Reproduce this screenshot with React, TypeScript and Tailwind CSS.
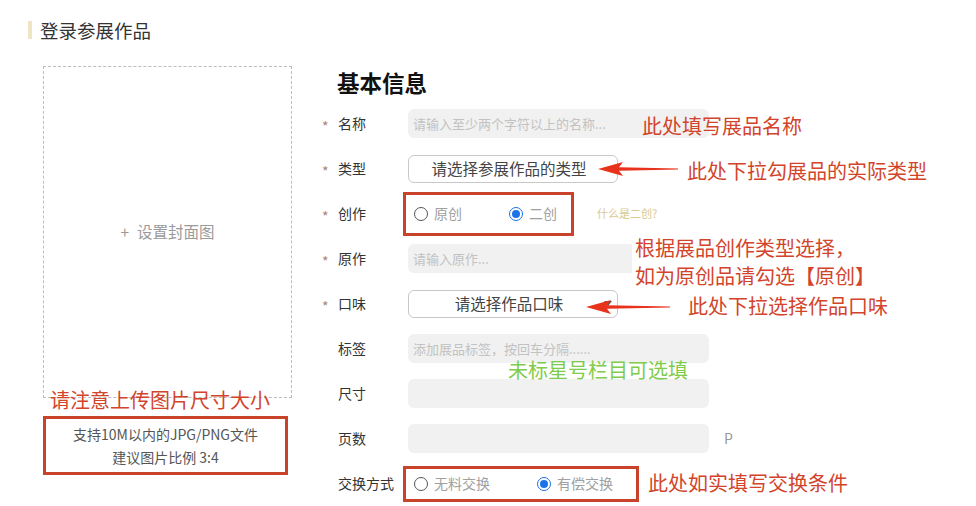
import React from "react";

const RED = "#d2442b";

function Arrow({ w }: { w: number }) {
  return (
    <svg width={w} height={14} viewBox={`0 0 ${w} 14`}>
      <polygon
        points={`0,7 25,0 21,5.2 ${w},6.5 ${w},7.5 21,8.8 25,14`}
        fill="#e8321c"
      />
    </svg>
  );
}

function Radio({ checked, label }: { checked?: boolean; label: string }) {
  return (
    <span className="flex items-center gap-[6px]">
      {checked ? (
        <span className="w-[14px] h-[14px] rounded-full border-[1.5px] border-[#1a73e8] bg-white flex items-center justify-center">
          <span className="w-[8px] h-[8px] rounded-full bg-[#1a73e8]" />
        </span>
      ) : (
        <span className="w-[14px] h-[14px] rounded-full border border-[#555] bg-white" />
      )}
      <span className="text-[14px] text-[#a0a0a0]">{label}</span>
    </span>
  );
}

function Row({
  star,
  label,
  children,
}: {
  star?: boolean;
  label: string;
  children?: React.ReactNode;
}) {
  return (
    <div className="h-[45px] flex items-center">
      <span className="w-[16px] text-[14px] text-[#a88484] leading-none pt-[4px]">
        {star ? "*" : ""}
      </span>
      <span className="w-[70px] text-[14px] text-[#333]">{label}</span>
      {children}
    </div>
  );
}

function Input({ ph }: { ph?: string }) {
  return (
    <div className="w-[301px] h-[29px] rounded-[6px] bg-[#f1f1f1] px-[5px] flex items-center text-[13px] text-[#c2c2c2]">
      {ph}
    </div>
  );
}

function Select({ text, arrow }: { text: string; arrow?: boolean }) {
  return (
    <div className="relative w-[210px] h-[28px] rounded-[6px] border border-[#c8c8c8] bg-white flex items-center justify-center pr-[8px] text-[15.5px] text-[#444]">
      {text}
      {arrow && (
        <span className="absolute right-[5px] top-[10px] w-0 h-0 border-l-[4px] border-r-[4px] border-t-[5px] border-l-transparent border-r-transparent border-t-[#555]" />
      )}
    </div>
  );
}

export default function App() {
  return (
    <div
      className="relative w-[976px] h-[506px] bg-white overflow-hidden"
      style={{ fontFamily: '"Noto Sans CJK SC", "Noto Sans", sans-serif' }}
    >
      {/* header */}
      <div className="h-[66px] flex items-start pt-[20px] pl-[28px]">
        <div className="flex items-center gap-[8px]">
          <span className="w-[4px] h-[18px] bg-[#efe5c4]" />
          <span className="text-[18.5px] leading-[20px] text-[#333]">登录参展作品</span>
        </div>
      </div>

      <div className="flex items-start">
        {/* left */}
        <div className="ml-[43px] w-[250px] flex flex-col">
          <div className="w-[249px] h-[332px] border border-dashed border-[#bdbdbd] flex items-center justify-center gap-[8px] text-[15.5px] text-[#9a9a9a]">
            <span>+</span>
            <span>设置封面图</span>
          </div>
          <div
            className="mt-[18px] w-[245px] h-[59px] border-[3px] flex flex-col items-center justify-center text-[14px] leading-[23px] text-[#555]"
            style={{ borderColor: "#c9432b" }}
          >
            <span>支持10M以内的JPG/PNG文件</span>
            <span>建议图片比例 3:4</span>
          </div>
        </div>

        {/* right */}
        <div className="ml-[29px] flex flex-col">
          <div className="h-[35px] pl-[15px] text-[22.5px] font-bold leading-[32px] text-[#111]">
            基本信息
          </div>
          <Row star label="名称">
            <Input ph="请输入至少两个字符以上的名称..." />
          </Row>
          <Row star label="类型">
            <Select text="请选择参展作品的类型" />
          </Row>
          <Row star label="创作">
            <div className="ml-[-5px] w-[171px] h-[44px] border-[3px] border-[#c9432b] flex items-center pl-[8px]">
              <span className="w-[95px]">
                <Radio label="原创" />
              </span>
              <Radio checked label="二创" />
            </div>
            <span className="ml-[23px] text-[11px] text-[#d9c98f]">什么是二创?</span>
          </Row>
          <Row star label="原作">
            <Input ph="请输入原作..." />
          </Row>
          <Row star label="口味">
            <Select text="请选择作品口味" arrow />
          </Row>
          <Row label="标签">
            <Input ph="添加展品标签，按回车分隔......" />
          </Row>
          <Row label="尺寸">
            <Input />
          </Row>
          <Row label="页数">
            <Input />
            <span className="ml-[15px] text-[14px] text-[#999]">P</span>
          </Row>
          <Row label="交换方式">
            <div className="ml-[-5px] w-[236px] h-[36px] border-[3px] border-[#c9432b] flex items-center pl-[8px]">
              <span className="w-[123px]">
                <Radio label="无料交换" />
              </span>
              <Radio checked label="有偿交换" />
            </div>
          </Row>
        </div>
      </div>

      {/* annotations (overlays) */}
      <div className="absolute left-[50px] top-[388px] text-[20px] leading-[24px]" style={{ color: RED }}>
        请注意上传图片尺寸大小
      </div>
      <div className="absolute left-[642px] top-[114px] text-[20px] leading-[24px]" style={{ color: RED }}>
        此处填写展品名称
      </div>
      <div className="absolute left-[598px] top-[162px]">
        <Arrow w={80} />
      </div>
      <div className="absolute left-[687px] top-[159px] text-[20px] leading-[24px]" style={{ color: RED }}>
        此处下拉勾展品的实际类型
      </div>
      <div
        className="absolute left-[632px] top-[234px] pl-[3px] pr-[4px] bg-white text-[20px] leading-[28px]"
        style={{ color: RED }}
      >
        <div>根据展品创作类型选择，</div>
        <div>如为原创品请勾选【原创】</div>
      </div>
      <div className="absolute left-[586px] top-[300px]">
        <Arrow w={84} />
      </div>
      <div className="absolute left-[688px] top-[294px] text-[20px] leading-[24px]" style={{ color: RED }}>
        此处下拉选择作品口味
      </div>
      <div className="absolute left-[508px] top-[358px] text-[20px] leading-[24px] text-[#7fcc4a]">
        未标星号栏目可选填
      </div>
      <div className="absolute left-[648px] top-[471px] text-[20px] leading-[24px]" style={{ color: RED }}>
        此处如实填写交换条件
      </div>
    </div>
  );
}
